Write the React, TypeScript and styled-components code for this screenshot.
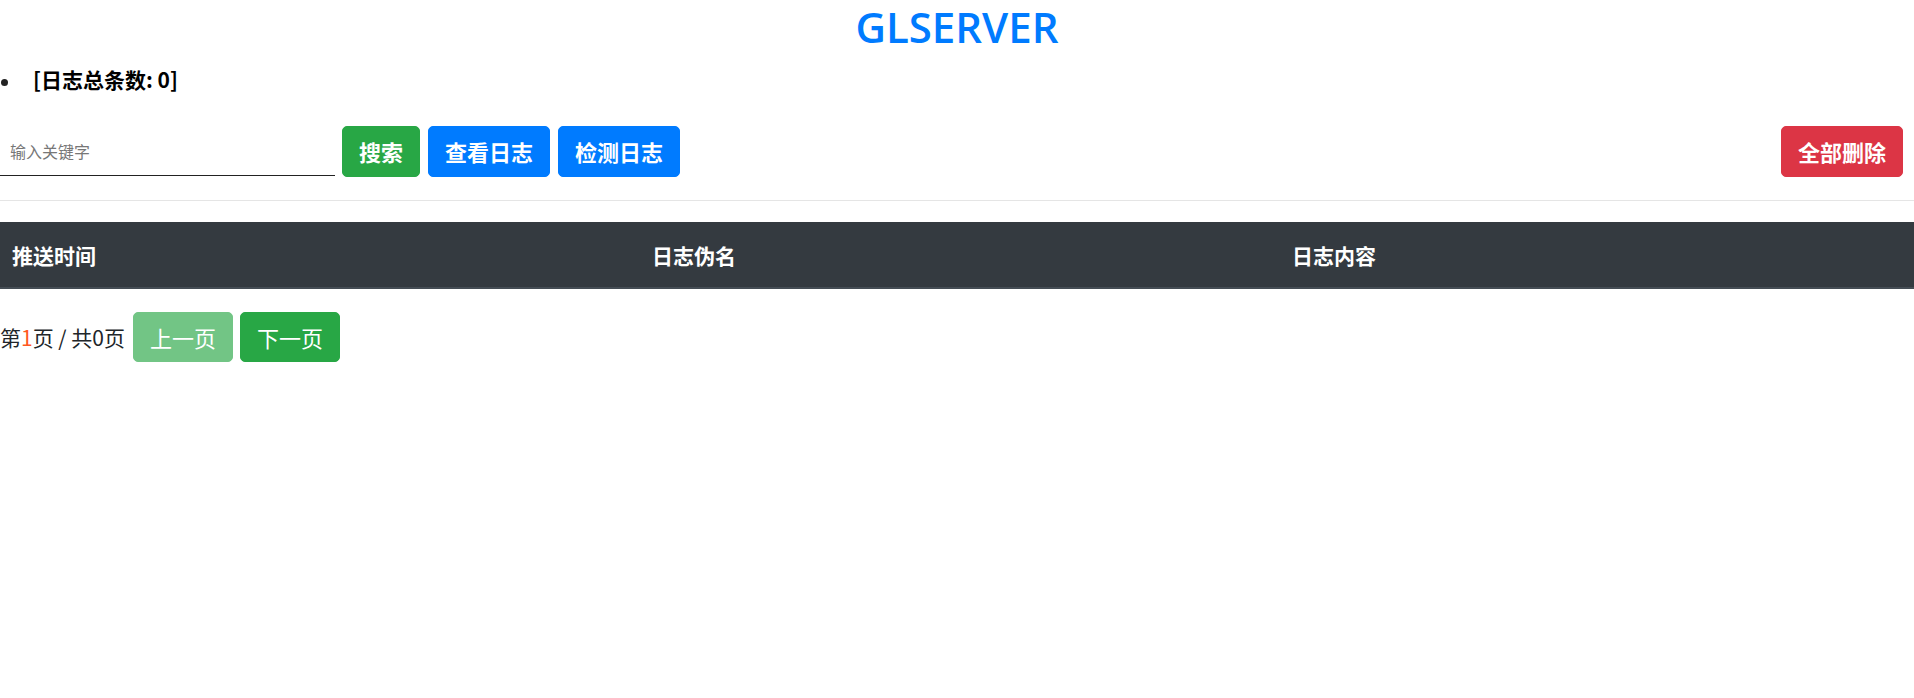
import React, { useState } from 'react';
import styled, { createGlobalStyle } from 'styled-components';

const GlobalStyle = createGlobalStyle`
  html, body {
    margin: 0;
    padding: 0;
    background: #fff;
    font-family: "Noto Sans CJK SC", "Open Sans", sans-serif;
    color: #212529;
  }
`;

const COLORS = {
  green: '#28a745',
  blue: '#007bff',
  red: '#dc3545',
  dark: '#343a40'
};

const Title = styled.h1`
  margin: 0;
  text-align: center;
  font-family: "Open Sans", "Noto Sans", sans-serif;
  font-weight: 600;
  font-size: 42px;
  line-height: 54px;
  color: ${COLORS.blue};
`;

const Summary = styled.ul`
  margin: 10px 0 0;
  padding-left: 33px;
  list-style: none;
  font-size: 21px;
  line-height: 30px;
  font-weight: 700;
  color: #000;

  & li::before {
    content: '';
    display: inline-block;
    width: 7px;
    height: 7px;
    margin: 0 25px 0 -32px;
    border-radius: 50%;
    background-color: #222;
    vertical-align: middle;
  }
`;

const Toolbar = styled.div`
  display: flex;
  align-items: center;
  margin-top: 32px;
  padding-right: 11px;
`;

const SearchInput = styled.input`
  width: 335px;
  height: 49px;
  box-sizing: border-box;
  padding: 0 10px;
  border: none;
  border-bottom: 1px solid #222;
  outline: none;
  font-family: inherit;
  font-size: 16px;
  margin-right: 7px;

  &::placeholder {
    color: #777;
  }
`;

interface IButton {
  color: string;
  bold?: boolean;
}

const Button = styled.button<IButton>`
  box-sizing: border-box;
  height: 51px;
  padding: 0 16px;
  margin-right: 8px;
  border: 1px solid ${props => props.color};
  border-radius: 5px;
  background-color: ${props => props.color};
  color: #fff;
  font-family: inherit;
  font-size: 22px;
  line-height: 1.5;
  font-weight: ${props => props.bold ? 700 : 400};
  cursor: pointer;

  &:disabled {
    opacity: 0.65;
    cursor: default;
  }
`;

const Spacer = styled.span`
  flex: 1;
`;

const Divider = styled.hr`
  margin: 23px 0 0;
  border: 0;
  border-top: 1px solid #e5e5e5;
`;

const TableHead = styled.div`
  display: grid;
  grid-template-columns: 640px 640px 1fr;
  margin-top: 21px;
  height: 67px;
  box-sizing: border-box;
  background-color: ${COLORS.dark};
  border-bottom: 2px solid #454d55;
`;

const HeadCell = styled.div`
  display: flex;
  align-items: center;
  padding: 0 12px;
  color: #fff;
  font-size: 21px;
  font-weight: 700;
`;

const Pager = styled.div`
  display: flex;
  align-items: center;
  margin-top: 23px;
  font-size: 21px;

  & > span {
    margin-right: 8px;
  }

  & ${Button} {
    height: 50px;
    margin-right: 7px;
  }
`;

const Current = styled.em`
  font-style: normal;
  color: #ff5722;
`;

export default function App() {
  const [keyword, setKeyword] = useState('');
  const page = 1;
  const total = 0;

  return (
    <>
      <GlobalStyle />
      <Title>GLSERVER</Title>
      <Summary>
        <li>[日志总条数: 0]</li>
      </Summary>
      <Toolbar>
        <SearchInput
          placeholder='输入关键字'
          value={keyword}
          onChange={e => setKeyword(e.target.value)}
        />
        <Button color={COLORS.green} bold>搜索</Button>
        <Button color={COLORS.blue} bold>查看日志</Button>
        <Button color={COLORS.blue} bold>检测日志</Button>
        <Spacer />
        <Button color={COLORS.red} bold style={{ marginRight: 0 }}>全部删除</Button>
      </Toolbar>
      <Divider />
      <TableHead>
        <HeadCell>推送时间</HeadCell>
        <HeadCell>日志伪名</HeadCell>
        <HeadCell>日志内容</HeadCell>
      </TableHead>
      <Pager>
        <span>第<Current>{page}</Current>页 / 共{total}页</span>
        <Button color={COLORS.green} disabled>上一页</Button>
        <Button color={COLORS.green}>下一页</Button>
      </Pager>
    </>
  );
}
